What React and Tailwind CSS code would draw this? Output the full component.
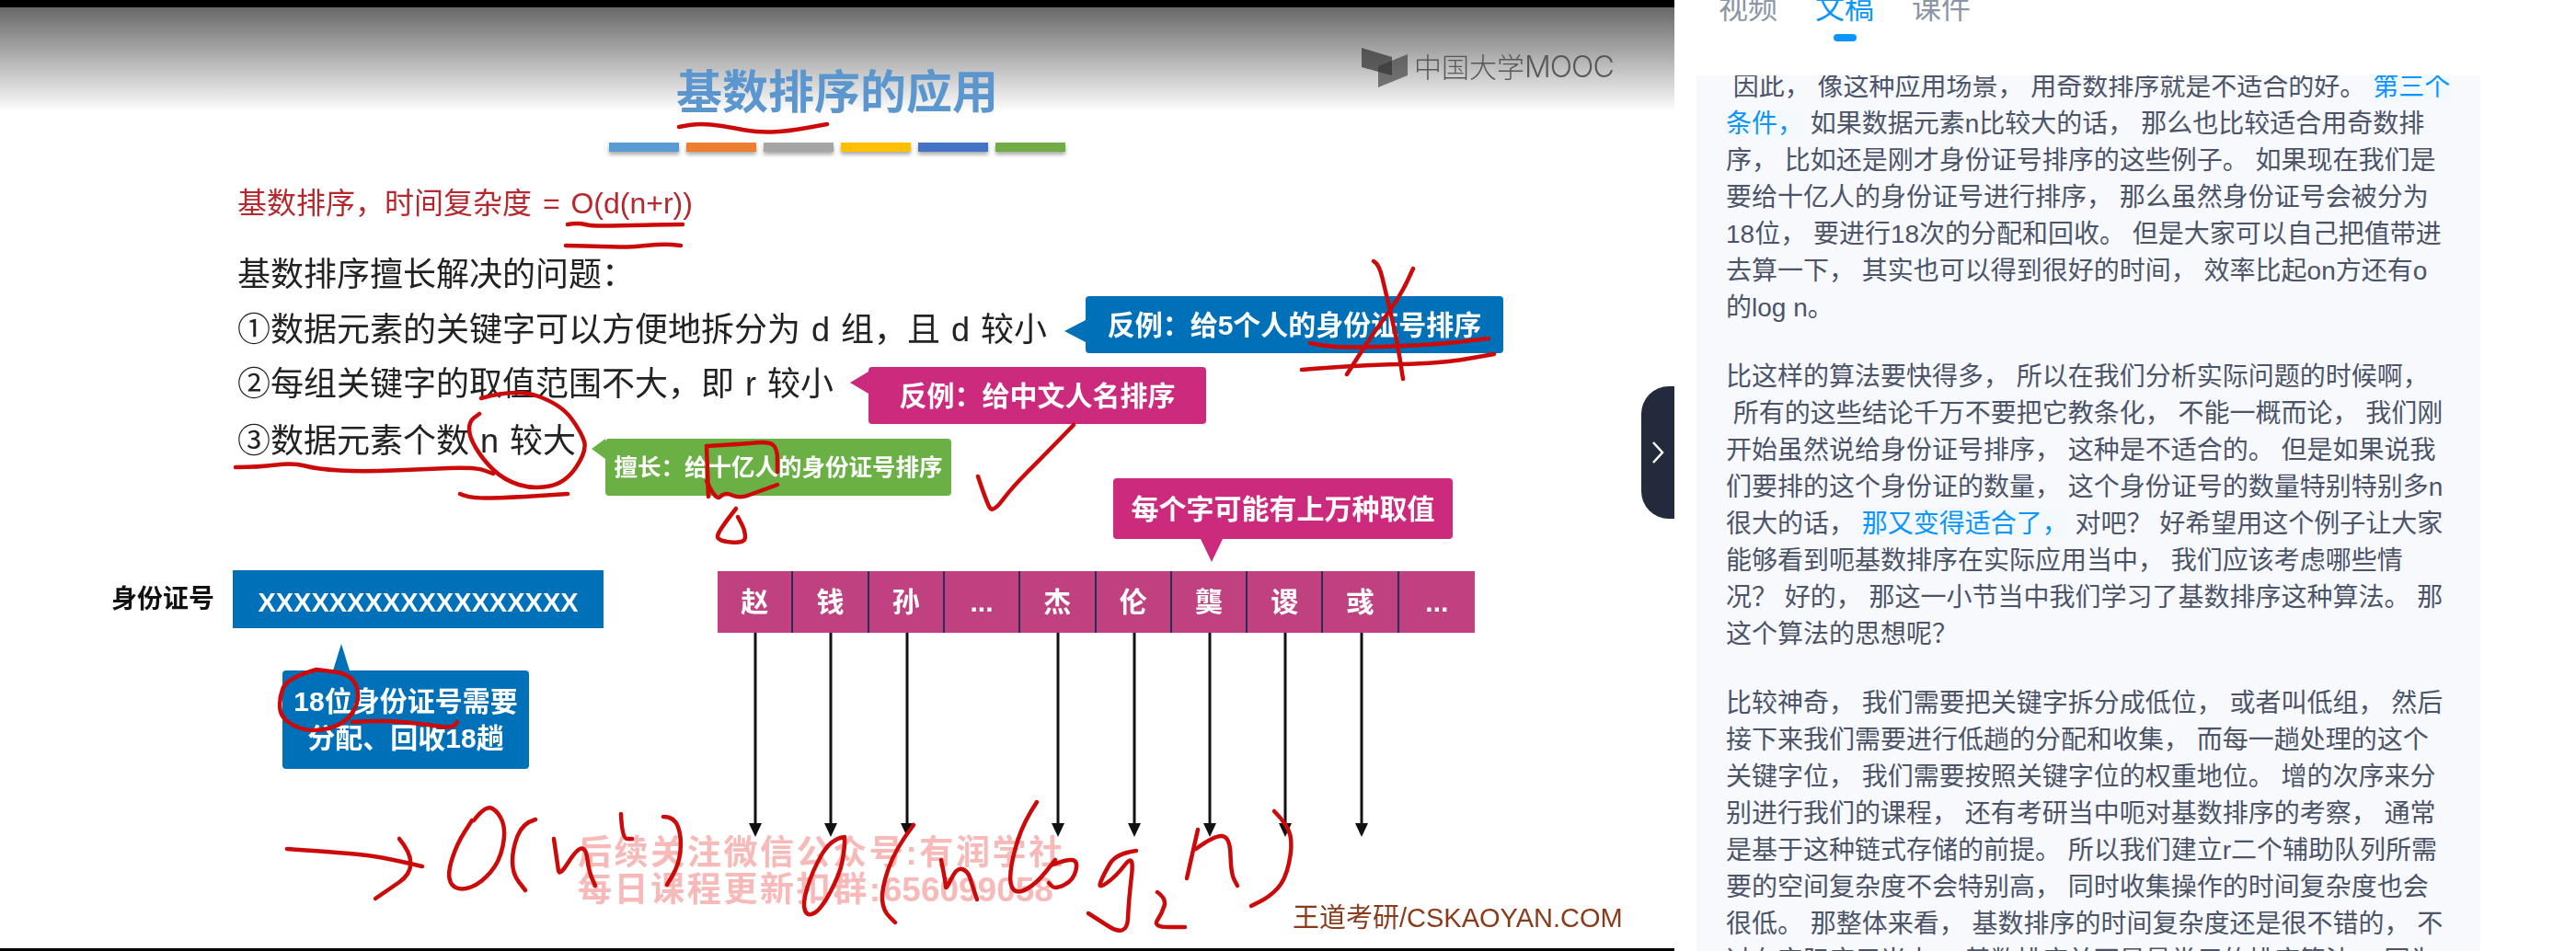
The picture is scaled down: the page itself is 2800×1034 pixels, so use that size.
import { Fragment } from "react";

const bars = ["bg-[#5b9bd5]", "bg-[#ed7d31]", "bg-[#a5a5a5]", "bg-[#ffc000]", "bg-[#4472c4]", "bg-[#70ad47]"];
const cells = ["赵", "钱", "孙", "...", "杰", "伦", "龑", "谡", "彧", "..."];

const paragraphs = [
  [
    [" 因此， 像这种应用场景， 用奇数排序就是不适合的好。 ", { hl: "第三个" }],
    [{ hl: "条件，" }, " 如果数据元素n比较大的话， 那么也比较适合用奇数排"],
    ["序， 比如还是刚才身份证号排序的这些例子。 如果现在我们是"],
    ["要给十亿人的身份证号进行排序， 那么虽然身份证号会被分为"],
    ["18位， 要进行18次的分配和回收。 但是大家可以自己把值带进"],
    ["去算一下， 其实也可以得到很好的时间， 效率比起on方还有o"],
    ["的log n。"],
  ],
  [
    ["比这样的算法要快得多， 所以在我们分析实际问题的时候啊，"],
    [" 所有的这些结论千万不要把它教条化， 不能一概而论， 我们刚"],
    ["开始虽然说给身份证号排序， 这种是不适合的。 但是如果说我"],
    ["们要排的这个身份证的数量， 这个身份证号的数量特别特别多n"],
    ["很大的话， ", { hl: "那又变得适合了，" }, " 对吧？ 好希望用这个例子让大家"],
    ["能够看到呃基数排序在实际应用当中， 我们应该考虑哪些情"],
    ["况？ 好的， 那这一小节当中我们学习了基数排序这种算法。 那"],
    ["这个算法的思想呢？"],
  ],
  [
    ["比较神奇， 我们需要把关键字拆分成低位， 或者叫低组， 然后"],
    ["接下来我们需要进行低趟的分配和收集， 而每一趟处理的这个"],
    ["关键字位， 我们需要按照关键字位的权重地位。 增的次序来分"],
    ["别进行我们的课程， 还有考研当中呃对基数排序的考察， 通常"],
    ["是基于这种链式存储的前提。 所以我们建立r二个辅助队列所需"],
    ["要的空间复杂度不会特别高， 同时收集操作的时间复杂度也会"],
    ["很低。 那整体来看， 基数排序的时间复杂度还是很不错的， 不"],
    ["过在实际应用当中， 基数排序并不是最常用的排序算法， 因为"],
  ],
];

// hand-written annotations on the slide, full-size coordinates
const ink = [
  [738,138, 752,135, 772,135, 797,139, 823,144, 855,143, 899,135],
  [617,244, 628,242, 644,246, 676,245, 742,244],
  [615,267, 663,268, 682,269, 721,265, 740,267],
  [523,433, 561,422, 610,440, 632,470, 638,490, 615,525, 580,532, 548,522, 525,500, 510,475, 510,458, 521,450],
  [256,508, 281,508, 319,503, 344,510, 395,513, 459,510, 517,508, 536,515],
  [500,537, 510,542, 555,541, 617,537],
  [768,485, 770,540],
  [768,485, 804,483, 835,480, 845,487, 845,513],
  [768,523, 778,545, 788,535, 804,542, 823,535, 845,527],
  [800,553, 781,577, 779,588, 810,591, 810,577, 802,562],
  [1493,284, 1499,287, 1506,317, 1518,367, 1525,412],
  [1536,292, 1524,320, 1494,360, 1464,407],
  [1424,373, 1445,378, 1506,377, 1567,374, 1618,368],
  [1415,402, 1476,397, 1567,395, 1624,385],
  [1063,518, 1072,545, 1079,558, 1100,530, 1135,495, 1167,462],
  [344,728, 312,737, 303,760, 306,783, 338,797, 376,787, 392,760, 383,733, 344,728],
  [383,785, 415,783, 459,787, 491,792, 497,785],
  [312,923, 383,928, 415,932, 459,942],
  [434,912, 459,942, 408,977],
  // O(n²)
  [515,892, 528,875, 542,883, 550,903, 543,937, 523,960, 503,968, 490,963, 487,947, 497,917, 513,892],
  [582,891, 568,895, 557,923, 557,950, 571,968],
  [602,912, 606,940, 608,953, 627,923, 637,922, 640,947, 647,963],
  [675,885, 676,912, 687,912],
  [721,888, 733,888, 741,910, 738,940, 725,962],
  // O(n log₂ n)
  [918,910, 903,912, 883,947, 872,983, 878,997, 893,988, 913,950, 918,923, 918,910],
  [993,897, 973,923, 958,967, 960,990, 973,1003],
  [1023,935, 1028,960, 1028,968, 1040,943, 1052,947, 1057,963, 1062,978],
  [1127,872, 1113,893, 1100,933, 1097,963, 1107,972, 1127,960, 1147,935],
  [1145,940, 1157,935, 1172,935, 1167,957, 1147,967, 1140,960],
  [1235,925, 1213,928, 1200,950, 1193,967, 1213,953, 1233,927, 1227,977, 1225,1020, 1183,993],
  [1258,970, 1268,977, 1263,993, 1253,1008, 1288,1008],
  [1302,902, 1290,955],
  [1300,923, 1320,908, 1337,910, 1338,950, 1345,963],
  [1385,882, 1400,897, 1405,920, 1397,957, 1380,975, 1360,985],
];

function inkPath(p) {
  let d = `M${p[0]} ${p[1]}`;
  for (let i = 2; i < p.length - 2; i += 2) {
    const mx = (p[i] + p[i + 2]) / 2;
    const my = (p[i + 1] + p[i + 3]) / 2;
    d += ` Q${p[i]} ${p[i + 1]} ${mx} ${my}`;
  }
  return `${d} L${p[p.length - 2]} ${p[p.length - 1]}`;
}

function Tab({ active, children }) {
  return (
    <div className="flex flex-col items-center">
      <span className={`text-[32px] leading-[40px] ${active ? "text-[#0a95ff]" : "text-[#8b95a5]"}`}>{children}</span>
      <span className={`mt-2 h-2 w-[25px] rounded ${active ? "bg-[#0a95ff]" : ""}`} />
    </div>
  );
}

function Arrow() {
  return (
    <svg width="16" height="222" viewBox="0 0 16 222" className="mx-auto block">
      <rect x="6.5" y="0" width="3" height="210" fill="#111" />
      <path d="M1 207 H15 L8 222 Z" fill="#111" />
    </svg>
  );
}

export default function App() {
  return (
    <div className="flex h-[1034px] w-[2800px] overflow-hidden bg-white font-['Liberation_Sans','Noto_Sans_CJK_SC',sans-serif]">
      <div className="relative flex w-[1820px] shrink-0 flex-col bg-[linear-gradient(#686868_8px,#ffffff_122px)] blur-[0.6px]">
        <div className="h-2 bg-black" />

        <h1 className="mt-[63px] text-center text-[50px] leading-[60px] font-bold text-[#5b96cf]">基数排序的应用</h1>
        <div className="mt-6 flex h-2.5 justify-center gap-2">
          {bars.map((b) => (
            <div key={b} className={`${b} w-[76px] shadow-[0_3px_4px_rgba(0,0,0,0.35)]`} />
          ))}
        </div>

        <div className="pl-[258px]">
          <p className="mt-9 text-[32px] leading-10 whitespace-pre text-[#b5292e] [word-spacing:3px]">基数排序，时间复杂度 = O(d(n+r))</p>
          <p className="mt-[38px] text-[36px] leading-10 whitespace-pre text-[#222]">基数排序擅长解决的问题：</p>
          <p className="mt-5 text-[36px] leading-10 whitespace-pre text-[#222] [word-spacing:2px]">①数据元素的关键字可以方便地拆分为 d 组，且 d 较小</p>
          <p className="mt-[19px] text-[36px] leading-10 whitespace-pre text-[#222] [word-spacing:2px]">②每组关键字的取值范围不大，即 r 较小</p>
          <p className="mt-[22px] text-[36px] leading-10 whitespace-pre text-[#222] [word-spacing:2px]">③数据元素个数 n 较大</p>
        </div>

        <div className="mt-[120px] flex items-start pl-[121px]">
          <div className="flex h-[63px] w-[132px] items-center text-[28px] font-bold text-[#111]">身份证号</div>
          <div className="w-[403px]">
            <div className="flex h-[63px] items-center justify-center bg-[#0071b8] pt-2 text-[29px] font-bold text-white">XXXXXXXXXXXXXXXXXX</div>
            <div className="mt-[17px] ml-[109px] h-0 w-0 border-x-[9px] border-b-[29px] border-x-transparent border-b-[#0071b8]" />
            <div className="ml-[54px] flex h-[107px] w-[268px] flex-col items-center justify-center rounded-sm bg-[#0071b8] text-[30px] leading-10 font-bold text-white">
              <span>18位身份证号需要</span>
              <span>分配、回收18趟</span>
            </div>
          </div>
          <div className="mt-px ml-[124px] w-[823px]">
            <div className="grid grid-cols-10 bg-[#bf4180]">
              {cells.map((c, i) => (
                <div key={i} className={`flex h-[67px] items-center justify-center text-[30px] font-bold text-white ${i < 9 ? "border-r-2 border-[#2d2b5c]" : ""}`}>{c}</div>
              ))}
            </div>
            <div className="grid grid-cols-10">
              {cells.map((c, i) => (
                <div key={i}>{c === "..." ? null : <Arrow />}</div>
              ))}
            </div>
          </div>
        </div>

        {/* callouts pinned next to the lines they explain */}
        <div className="absolute top-[322px] left-[1180px] flex h-[62px] w-[454px] items-center justify-center rounded-sm bg-[#0071b8] text-[30px] font-bold text-white">
          <span className="absolute top-[26px] right-full h-0 w-0 border-y-[12px] border-r-[23px] border-y-transparent border-r-[#0071b8]" />
          反例：给5个人的身份证号排序
        </div>
        <div className="absolute top-[399px] left-[944px] flex h-[62px] w-[367px] items-center justify-center rounded-sm bg-[#cc2a7c] text-[30px] font-bold text-white">
          <span className="absolute top-[5px] right-full h-0 w-0 border-y-[12px] border-r-[20px] border-y-transparent border-r-[#cc2a7c]" />
          反例：给中文人名排序
        </div>
        <div className="absolute top-[477px] left-[658px] flex h-[62px] w-[376px] items-center justify-center rounded-sm bg-[#6ab044] text-[25.5px] font-bold text-white">
          <span className="absolute top-0 right-full h-0 w-0 border-y-[11px] border-r-[15px] border-y-transparent border-r-[#6ab044]" />
          擅长：给十亿人的身份证号排序
        </div>
        <div className="absolute top-[520px] left-[1210px] flex h-[66px] w-[369px] items-center justify-center rounded-sm bg-[#cc2a7c] text-[30px] font-bold text-white">
          <span className="absolute top-full left-[95px] h-0 w-0 border-x-[12px] border-t-[25px] border-x-transparent border-t-[#cc2a7c]" />
          每个字可能有上万种取值
        </div>

        {/* MOOC logo */}
        <div className="absolute top-[50px] left-[1480px] flex items-center font-['Inter','Noto_Sans_CJK_SC',sans-serif] text-[30px] leading-[44px] font-light text-[#585858]">
          <svg width="52" height="46" viewBox="0 0 52 46" className="mr-[5px]">
            <path d="M0 2 L33 12 L33 32 L0 23 Z" fill="#333" fillOpacity="0.72" />
            <path d="M18 22 L50 9 L50 32 L18 45 Z" fill="#333" fillOpacity="0.62" />
          </svg>
          <span>中国大学</span>
          <span className="text-[32px] tracking-[-1px]">MOOC</span>
        </div>

        {/* video watermarks */}
        <div className="absolute top-[908px] left-[628px] text-[37px] leading-10 font-bold whitespace-nowrap text-[#f8b9b9]">
          <div><span className="tracking-[2.6px]">后续关注微信公众号:</span><span className="tracking-[2.6px]">有润学社</span></div>
          <div><span className="tracking-[2.6px]">每日课程更新扣群:</span>656099058</div>
        </div>
        <div className="absolute top-[980px] left-[1405px] text-[29px] leading-[36px] whitespace-nowrap text-[#8b3a1a]">王道考研/CSKAOYAN.COM</div>

        <svg className="pointer-events-none absolute inset-0" width="1820" height="1034" viewBox="0 0 1820 1034" fill="none" stroke="#cc0a0a" strokeWidth="4.5" strokeLinecap="round" strokeLinejoin="round">
          {ink.map((p, i) => (
            <path key={i} d={inkPath(p)} />
          ))}
        </svg>

        <div className="mt-auto h-[3px] bg-black" />
      </div>

      <div className="relative flex flex-1 flex-col pl-6">
        <button className="absolute top-[420px] -left-9 flex h-[144px] w-9 items-center justify-center rounded-l-[30px] bg-[#232a3b]">
          <svg width="14" height="24" viewBox="0 0 14 24" fill="none" stroke="#fff" strokeWidth="2.5">
            <path d="M2 1 L12 12 L2 23" />
          </svg>
        </button>
        <div className="flex h-[82px] gap-[41px] pl-6">
          <div className="-mt-[11px] flex gap-[41px]">
            <Tab>视频</Tab>
            <Tab active>文稿</Tab>
            <Tab>课件</Tab>
          </div>
        </div>
        <div className="w-[852px] flex-1 overflow-hidden bg-[#f8f9fd] px-8">
          <div className="-mt-[7px] flex flex-col gap-[35px] text-[28px] leading-10 whitespace-pre text-[#4b5468]">
            {paragraphs.map((lines, i) => (
              <div key={i}>
                {lines.map((parts, j) => (
                  <div key={j}>
                    {parts.map((part, k) => (
                      <Fragment key={k}>
                        {typeof part === "string" ? part : <span className="bg-[#f4f9fe] text-[#0a95ff]">{part.hl}</span>}
                      </Fragment>
                    ))}
                  </div>
                ))}
              </div>
            ))}
          </div>
        </div>
      </div>
    </div>
  );
}
